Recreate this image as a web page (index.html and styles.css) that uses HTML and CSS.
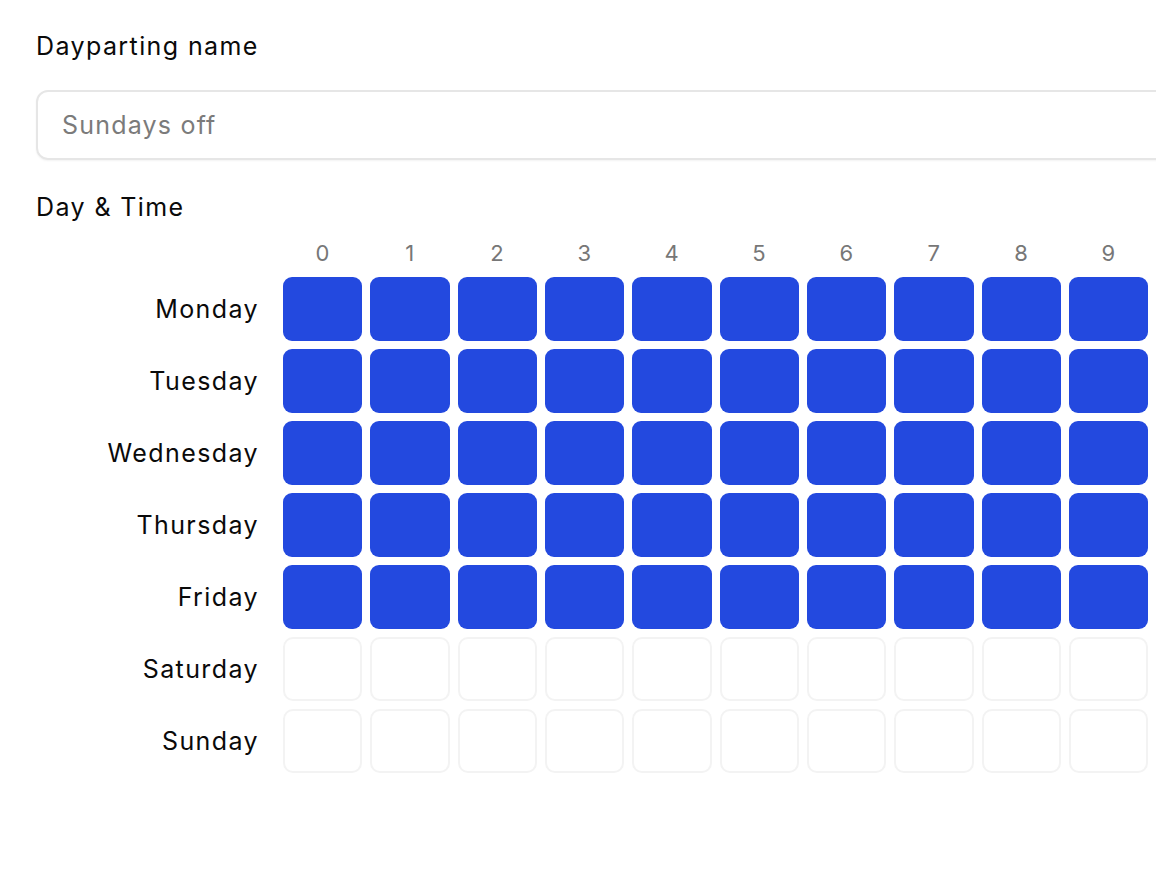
FILE: index.html
```html
<!DOCTYPE html>
<html lang="en">
<head>
<meta charset="utf-8">
<title>Dayparting</title>
<link rel="stylesheet" href="styles.css">
</head>
<body>
<div class="page">
  <div class="field-label">Dayparting name</div>
  <div class="input"><span class="placeholder">Sundays off</span></div>
  <div class="section-label">Day &amp; Time</div>
  <div class="grid">
    <div class="corner"></div>
    <div class="hour">0</div><div class="hour">1</div><div class="hour">2</div><div class="hour">3</div><div class="hour">4</div><div class="hour">5</div><div class="hour">6</div><div class="hour">7</div><div class="hour">8</div><div class="hour">9</div><div class="hour">10</div><div class="hour">11</div><div class="hour">12</div><div class="hour">13</div><div class="hour">14</div><div class="hour">15</div><div class="hour">16</div><div class="hour">17</div><div class="hour">18</div><div class="hour">19</div><div class="hour">20</div><div class="hour">21</div><div class="hour">22</div><div class="hour">23</div>
  </div>
</div>
<script src="app.js"></script>
</body>
</html>
```
FILE: styles.css
```css
html, body {
  margin: 0;
  padding: 0;
  background: #ffffff;
}
body {
  font-family: Inter, "Noto Sans", "Liberation Sans", sans-serif;
  color: #0a0a0a;
}
.page {
  width: 1156px;
  height: 884px;
  box-sizing: border-box;
  padding: 30px 0 0 36px;
  overflow: hidden;
}
.field-label, .section-label {
  font-size: 25px;
  line-height: 32px;
  letter-spacing: 1.4px;
  white-space: nowrap;
}
.input {
  margin-top: 28px;
  width: 2200px;
  height: 70px;
  box-sizing: border-box;
  border: 2px solid #e6e6e6;
  border-radius: 12px;
  box-shadow: 0 1px 2px rgba(0,0,0,0.05);
  display: flex;
  align-items: center;
  padding-left: 24px;
}
.placeholder {
  font-size: 25px;
  letter-spacing: 1.2px;
  color: #7b7b7b;
}
.section-label {
  margin-top: 31px;
}
.grid {
  margin-top: 14px;
  display: grid;
  grid-template-columns: 239px repeat(24, 79.33px);
  grid-template-rows: 32px repeat(7, 64px);
  column-gap: 8px;
  row-gap: 8px;
  width: max-content;
}
.hour {
  font-size: 22px;
  line-height: 32px;
  letter-spacing: 0.5px;
  color: #777777;
  text-align: center;
}
.day {
  font-size: 25px;
  line-height: 64px;
  letter-spacing: 1.4px;
  text-align: right;
  padding-right: 16px;
  white-space: nowrap;
}
.cell {
  border-radius: 9px;
  box-sizing: border-box;
}
.cell.on {
  background: #2349df;
}
.cell.off {
  border: 2px solid #f3f3f3;
  border-radius: 10px;
}
```
FILE: app.js
```js
(function () {
  var days = ["Monday", "Tuesday", "Wednesday", "Thursday", "Friday", "Saturday", "Sunday"];
  var grid = document.querySelector(".grid");
  days.forEach(function (d, i) {
    var lab = document.createElement("div");
    lab.className = "day";
    lab.textContent = d;
    grid.appendChild(lab);
    for (var h = 0; h < 24; h++) {
      var c = document.createElement("div");
      c.className = "cell " + (i < 5 ? "on" : "off");
      grid.appendChild(c);
    }
  });
})();
```
